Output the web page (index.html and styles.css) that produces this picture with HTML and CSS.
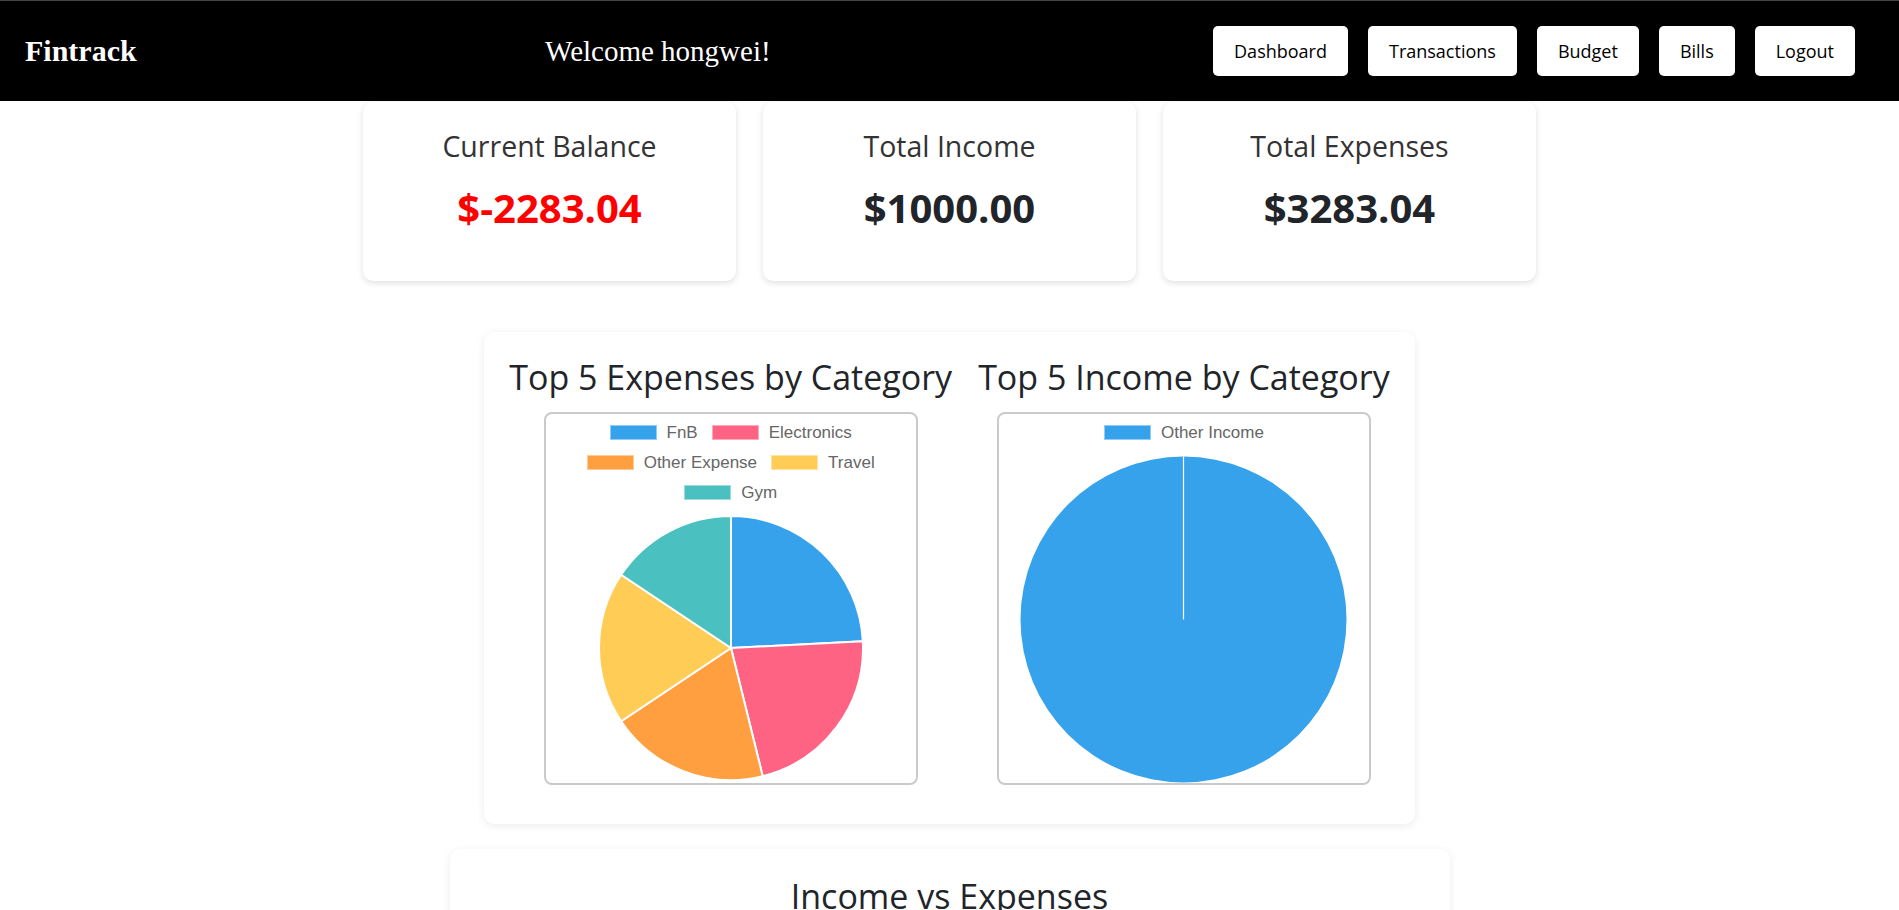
FILE: index.html
```html
<!DOCTYPE html>
<html lang="en">
<head>
<meta charset="utf-8">
<title>Fintrack - Dashboard</title>
<link rel="stylesheet" href="styles.css">
</head>
<body>
<nav class="navbar">
  <div class="brand">Fintrack</div>
  <div class="welcome">Welcome hongwei!</div>
  <div class="nav-links">
    <button class="nav-btn">Dashboard</button>
    <button class="nav-btn">Transactions</button>
    <button class="nav-btn">Budget</button>
    <button class="nav-btn">Bills</button>
    <button class="nav-btn">Logout</button>
  </div>
</nav>

<main class="dashboard">
  <section class="stats">
    <div class="stat-card">
      <h3 class="stat-title">Current Balance</h3>
      <p class="stat-value negative">$-2283.04</p>
    </div>
    <div class="stat-card">
      <h3 class="stat-title">Total Income</h3>
      <p class="stat-value">$1000.00</p>
    </div>
    <div class="stat-card">
      <h3 class="stat-title">Total Expenses</h3>
      <p class="stat-value">$3283.04</p>
    </div>
  </section>

  <section class="chart-card">
    <div class="chart-col">
      <h2 class="chart-title">Top 5 Expenses by Category</h2>
      <div class="chart-box">
        <div class="legend">
          <div class="legend-row">
            <span class="legend-item"><span class="swatch c-blue"></span>FnB</span>
            <span class="legend-item"><span class="swatch c-pink"></span>Electronics</span>
          </div>
          <div class="legend-row">
            <span class="legend-item"><span class="swatch c-orange"></span>Other Expense</span>
            <span class="legend-item"><span class="swatch c-yellow"></span>Travel</span>
          </div>
          <div class="legend-row">
            <span class="legend-item"><span class="swatch c-teal"></span>Gym</span>
          </div>
        </div>
        <svg class="pie pie-expenses" width="266" height="266" viewBox="0 0 266 266">
          <path class="f-blue" d="M133,133 L133,1 A132,132 0 0 1 264.83,126.32 Z"/>
          <path class="f-pink" d="M133,133 L264.83,126.32 A132,132 0 0 1 164.71,261.14 Z"/>
          <path class="f-orange" d="M133,133 L164.71,261.14 A132,132 0 0 1 23.18,206.24 Z"/>
          <path class="f-yellow" d="M133,133 L23.18,206.24 A132,132 0 0 1 23.18,59.76 Z"/>
          <path class="f-teal" d="M133,133 L23.18,59.76 A132,132 0 0 1 133,1 Z"/>
        </svg>
      </div>
    </div>
    <div class="chart-col">
      <h2 class="chart-title">Top 5 Income by Category</h2>
      <div class="chart-box">
        <div class="legend">
          <div class="legend-row">
            <span class="legend-item"><span class="swatch c-blue"></span>Other Income</span>
          </div>
        </div>
        <svg class="pie pie-income" width="327" height="327" viewBox="0 0 327 327">
          <circle class="f-blue-solid" cx="163.5" cy="163.5" r="163"/>
          <line class="pie-seam" x1="163.5" y1="0.5" x2="163.5" y2="163.5"/>
        </svg>
      </div>
    </div>
  </section>

  <section class="wide-card">
    <h2 class="chart-title">Income vs Expenses</h2>
    <div class="line-area"></div>
  </section>
</main>
</body>
</html>
```

FILE: styles.css
```css
* {
  box-sizing: border-box;
}

body {
  margin: 0;
  background: #fff;
  font-family: "Open Sans", "Noto Sans", sans-serif;
  color: #212529;
}

/* ---------- navbar ---------- */
.navbar {
  display: flex;
  align-items: center;
  justify-content: space-between;
  height: 101px;
  padding: 0 44px 0 25px;
  background: #000;
  border-top: 1px solid #454545;
}

.brand {
  font-family: "Liberation Serif", "Times New Roman", serif;
  font-weight: 700;
  font-size: 30px;
  color: #fff;
}

.welcome {
  font-family: "Liberation Serif", "Times New Roman", serif;
  font-size: 29px;
  color: #fff;
  margin-right: 34px;
}

.nav-links {
  display: flex;
  gap: 20px;
}

.nav-btn {
  height: 50px;
  padding: 0 21px;
  border: none;
  border-radius: 5px;
  background: #fff;
  color: #000;
  font-family: "Open Sans", "Noto Sans", sans-serif;
  font-size: 18px;
  cursor: pointer;
}

/* ---------- stat cards ---------- */
.stats {
  display: flex;
  justify-content: center;
  gap: 27px;
  margin-top: 1px;
}

.stat-card {
  width: 373px;
  height: 179px;
  padding-top: 27px;
  text-align: center;
  background: #fff;
  border-radius: 10px;
  box-shadow: 0 2px 6px rgba(0, 0, 0, 0.13);
}

.stat-title {
  margin: 0;
  font-size: 28.5px;
  font-weight: 500;
  line-height: 1.2;
  color: #333;
}

.stat-value {
  margin: 21px 0 0;
  font-size: 40px;
  font-weight: 700;
  line-height: 1.2;
  color: #212529;
}

.stat-value.negative {
  color: #ff0000;
}

/* ---------- charts card ---------- */
.chart-card {
  display: flex;
  gap: 26px;
  width: fit-content;
  margin: 51px auto 0;
  padding: 25px 25px 39px;
  background: #fff;
  border-radius: 10px;
  box-shadow: 0 2px 8px rgba(0, 0, 0, 0.08);
}

.chart-col {
  display: flex;
  flex-direction: column;
  align-items: center;
}

.chart-title {
  margin: 0 0 14px;
  font-size: 34px;
  font-weight: 500;
  line-height: 1.2;
  color: #212529;
  white-space: nowrap;
}

.chart-box {
  width: 374px;
  height: 373px;
  border: 2px solid #cacaca;
  border-radius: 8px;
  display: flex;
  flex-direction: column;
  align-items: center;
}

.legend {
  padding-top: 4px;
  width: 100%;
}

.legend-row {
  display: flex;
  justify-content: center;
  align-items: center;
  gap: 14px;
  height: 30px;
}

.legend-item {
  display: flex;
  align-items: center;
  gap: 10px;
  font-family: "Liberation Sans", Arial, sans-serif;
  font-size: 17px;
  color: #666;
}

.swatch {
  display: inline-block;
  width: 47px;
  height: 15px;
  box-shadow: inset 0 0 0 1px rgba(255, 255, 255, 0.45);
}

.c-blue { background: #36a2eb; }
.c-pink { background: #ff6384; }
.c-orange { background: #ff9f40; }
.c-yellow { background: #ffcd56; }
.c-teal { background: #4bc0c0; }

.pie {
  display: block;
}

.pie-expenses {
  margin-top: 7px;
}

.pie-income {
  margin-top: 8px;
}

.pie path {
  stroke: #fff;
  stroke-width: 2;
  stroke-linejoin: round;
}

.f-blue { fill: #36a2eb; }
.f-pink { fill: #ff6384; }
.f-orange { fill: #ff9f40; }
.f-yellow { fill: #ffcd56; }
.f-teal { fill: #4bc0c0; }

.f-blue-solid {
  fill: #36a2eb;
}

.pie-seam {
  stroke: #fff;
  stroke-width: 1.2;
}

/* ---------- income vs expenses ---------- */
.wide-card {
  width: 1000px;
  margin: 25px auto 40px;
  padding: 27px 25px 25px;
  text-align: center;
  background: #fff;
  border-radius: 10px;
  box-shadow: 0 2px 8px rgba(0, 0, 0, 0.08);
}

.line-area {
  height: 420px;
}
```
